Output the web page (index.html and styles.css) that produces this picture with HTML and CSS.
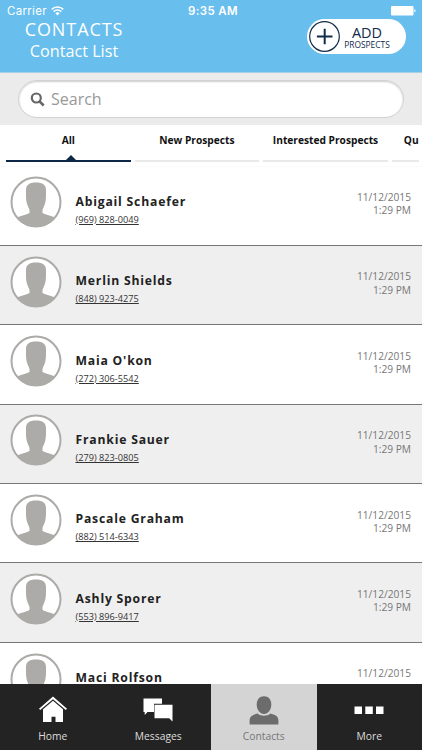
FILE: index.html
```html
<!DOCTYPE html>
<html lang="en">
<head>
  <meta charset="UTF-8">
  <meta name="viewport" content="width=device-width, initial-scale=1.0">
  <title>Contact List</title>
  <link rel="stylesheet" href="styles.css">
</head>
<body>
  <svg class="defs" width="0" height="0">
    <symbol id="avatar" viewBox="0 0 52 52">
      <circle cx="26" cy="26" r="24.500" fill="#fff"/>
      <path d="M26 6.500c7 0 10 2.500 10 7.500 0 5 .2 9-.8 13-.8 3-2.200 5-2.700 7v3c2.500 1.500 7 2 12.500 4.500C41 47.500 34 51 26 51S11 47.500 7 41.500C12.500 39 17 38.500 19.500 37v-3c-.5-2-1.900-4-2.700-7-1-4-.8-8-.8-13 0-5 3-7.500 10-7.500z" fill="#acaba8"/>
      <circle cx="26" cy="26" r="24.500" fill="none" stroke="#acaba8" stroke-width="2"/>
    </symbol>
  </svg>

  <div class="app">
    <header class="header">
      <div class="status">
        <span class="carrier">Carrier
          <svg class="wifi" width="13" height="10" viewBox="0 0 13 10" fill="none" stroke="#fff" stroke-width="1.5">
            <path d="M.7 3.400a8.400 8.400 0 0 1 11.600 0M2.700 5.600a5.500 5.500 0 0 1 7.600 0"/>
            <path d="M4.400 7.200a3.200 3.200 0 0 1 4.200 0L6.500 9.500z" fill="#fff" stroke="none"/>
          </svg>
        </span>
        <span class="time">9:35 AM</span>
        <svg class="battery" width="25" height="10" viewBox="0 0 25 10" fill="#fff">
          <rect width="22.500" height="9.500" rx="1"/>
          <path d="M23.300 3.300q1.300.4 1.300 1.500t-1.300 1.500z"/>
        </svg>
      </div>
      <div class="title-bar">
        <div class="titles">
          <h1>CONTACTS</h1>
          <h2>Contact List</h2>
        </div>
        <button class="add">
          <svg width="31" height="31" viewBox="0 0 31 31" fill="none" stroke="#102b4b">
            <circle cx="15.500" cy="15.500" r="14.800" stroke-width="1.200"/>
            <path d="M15.700 7.700v15.600M7.900 15.500h15.600" stroke-width="2"/>
          </svg>
          <span class="add-text"><b>ADD</b><small>PROSPECTS</small></span>
        </button>
      </div>
    </header>

    <div class="search">
      <div class="search-box">
        <svg width="15" height="15" viewBox="0 0 15 15" fill="none" stroke="#666">
          <circle cx="6.300" cy="6" r="4.500" stroke-width="2.200"/>
          <path d="M9.500 9.300l4.200 4.200" stroke-width="2.600"/>
        </svg>
        <span>Search</span>
      </div>
    </div>

    <nav class="tabs">
      <div class="tab active">All</div>
      <div class="tab">New Prospects</div>
      <div class="tab">Interested Prospects</div>
      <div class="tab cut">Qu</div>
    </nav>

    <main class="list">
      <div class="row">
        <svg class="avatar"><use href="#avatar"/></svg>
        <div class="info"><h3>Abigail Schaefer</h3><span class="phone">(969) 828-0049</span></div>
        <div class="date">11/12/2015<br>1:29 PM</div>
      </div>
      <div class="row">
        <svg class="avatar"><use href="#avatar"/></svg>
        <div class="info"><h3>Merlin Shields</h3><span class="phone">(848) 923-4275</span></div>
        <div class="date">11/12/2015<br>1:29 PM</div>
      </div>
      <div class="row">
        <svg class="avatar"><use href="#avatar"/></svg>
        <div class="info"><h3>Maia O'kon</h3><span class="phone">(272) 306-5542</span></div>
        <div class="date">11/12/2015<br>1:29 PM</div>
      </div>
      <div class="row">
        <svg class="avatar"><use href="#avatar"/></svg>
        <div class="info"><h3>Frankie Sauer</h3><span class="phone">(279) 823-0805</span></div>
        <div class="date">11/12/2015<br>1:29 PM</div>
      </div>
      <div class="row">
        <svg class="avatar"><use href="#avatar"/></svg>
        <div class="info"><h3>Pascale Graham</h3><span class="phone">(882) 514-6343</span></div>
        <div class="date">11/12/2015<br>1:29 PM</div>
      </div>
      <div class="row">
        <svg class="avatar"><use href="#avatar"/></svg>
        <div class="info"><h3>Ashly Sporer</h3><span class="phone">(553) 896-9417</span></div>
        <div class="date">11/12/2015<br>1:29 PM</div>
      </div>
      <div class="row">
        <svg class="avatar"><use href="#avatar"/></svg>
        <div class="info"><h3>Maci Rolfson</h3></div>
        <div class="date">11/12/2015</div>
      </div>
    </main>

    <footer class="bottom-nav">
      <div class="nav-item">
        <svg width="30" height="30" viewBox="0 0 30 30" fill="#fff">
          <path d="M15 .5l14 12.300-1.200 1.200L15 3.200 2.200 14 1 12.800z"/>
          <path d="M15 4.700l10 8.500V26h-7.500v-5.300h-4V26H5V13.200z"/>
        </svg>
        <span>Home</span>
      </div>
      <div class="nav-item">
        <svg width="30" height="30" viewBox="0 0 30 30" fill="#fff">
          <path d="M.5 2.500H19v5.300H11V16H4.500L1.700 19v-3H.5z"/>
          <path d="M11.500 8.700h18V25.500l-3.300-3.200H11.500z"/>
        </svg>
        <span>Messages</span>
      </div>
      <div class="nav-item selected">
        <svg width="30" height="30" viewBox="0 0 30 30" fill="#6c6c6c">
          <path d="M15 .2c4.500 0 7.300 3.300 7.300 8.300 0 5.200-3.200 9.500-7.300 9.500s-7.300-4.300-7.300-9.500C7.700 3.500 10.500.2 15 .2z"/>
          <path d="M8.500 17.500c3.500 3 9.500 3 13 0 4 1.200 7.500 2.200 7.900 6.500v4.500H.6V24C1 19.700 4.500 18.700 8.500 17.500z"/>
        </svg>
        <span>Contacts</span>
      </div>
      <div class="nav-item">
        <svg width="30" height="30" viewBox="0 0 30 30" fill="#fff">
          <path d="M.5 10.500H8V18H.5zM11.300 10.500h7.500V18h-7.500zM22 10.500h7.500V18H22z"/>
        </svg>
        <span>More</span>
      </div>
    </footer>
  </div>
</body>
</html>
```

FILE: styles.css
```css
* {
  box-sizing: border-box;
}

body {
  margin: 0;
  font-family: "Open Sans", "Noto Sans", sans-serif;
  background: #fff;
}

h1, h2, h3 {
  margin: 0;
  font-weight: normal;
}

.defs {
  display: none;
}

.app {
  display: flex;
  flex-direction: column;
  height: 750px;
  overflow: hidden;
}

/* header */
.header {
  flex: none;
  height: 73px;
  background: #68beed;
  border-bottom: 1px solid #a5d0e8;
  color: #fff;
}

.status {
  display: grid;
  grid-template-columns: 1fr auto 1fr;
  align-items: center;
  height: 19px;
  padding: 3px 6px 0 7px;
  font-family: Inter, sans-serif;
  font-size: 11.5px;
  line-height: 16px;
}

.carrier {
  display: flex;
  gap: 4px;
  align-items: center;
  letter-spacing: 0.3px;
}

.time {
  padding-left: 3px;
  font-weight: 600;
  letter-spacing: 0.4px;
}

.battery {
  justify-self: end;
}

.title-bar {
  display: flex;
  justify-content: space-between;
  padding: 0 16px 0 24px;
}

.titles {
  width: 100px;
  text-align: center;
}

.titles h1 {
  font-size: 18px;
  line-height: 20px;
  letter-spacing: 0.9px;
  white-space: nowrap;
}

.titles h2 {
  font-size: 16.2px;
  line-height: 25px;
  white-space: nowrap;
}

.add {
  display: flex;
  align-items: center;
  width: 99px;
  height: 35px;
  padding: 0 0 0 2px;
  border: none;
  border-radius: 18px;
  background: #fff;
  color: #102b4b;
  font-family: inherit;
}

.add-text {
  display: flex;
  flex-direction: column;
  align-items: center;
  width: 54px;
  padding-top: 2px;
}

.add b {
  font-size: 14.500px;
  font-weight: normal;
  line-height: 14px;
}

.add small {
  font-size: 8.400px;
  line-height: 10px;
}

/* search */
.search {
  flex: none;
  height: 52px;
  padding: 7px 18px;
  background: #ebebeb;
}

.search-box {
  display: flex;
  align-items: center;
  gap: 6px;
  height: 38px;
  padding: 0 11px;
  border: 1px solid #d2d2d2;
  border-radius: 19px;
  background: #fff;
  box-shadow: inset 0 1px 2px #ccc;
  color: #999;
  font-size: 16px;
}

/* tabs */
.tabs {
  flex: none;
  display: flex;
  gap: 4px;
  height: 41.500px;
  padding: 0 3px 4px 6px;
  border-bottom: 1px solid #fafafa;
  overflow: hidden;
}

.tab {
  flex: 0 0 124.600px;
  height: 37px;
  padding-top: 8px;
  border-bottom: 2px solid #e9e9e9;
  color: #111;
  font-size: 10.200px;
  font-weight: bold;
  line-height: 15px;
  text-align: center;
}

.tab.active {
  position: relative;
  border-color: #0d2846;
}

/* pointer above the active line */
.tab.active::after {
  content: "";
  position: absolute;
  left: 52%;
  bottom: 0;
  margin-left: -5px;
  border: 5px solid transparent;
  border-top: none;
  border-bottom-color: #0d2846;
}

.tab.cut {
  flex: 0 0 27px;
  padding-left: 12px;
  text-align: left;
}

/* contacts */
.list {
  flex: 1;
  min-height: 0;
  overflow: hidden;
}

.row {
  display: flex;
  height: 79.400px;
  padding: 9.800px 11px 0 10px;
  border-bottom: 1px solid #777;
}

.row:nth-child(even) {
  background: #efefef;
}

.avatar {
  width: 52px;
  height: 52px;
}

.info {
  flex: 1;
  padding: 15.500px 0 0 13.500px;
}

.info h3 {
  color: #222;
  font-size: 12.200px;
  font-weight: bold;
  line-height: 19px;
  letter-spacing: 0.8px;
}

.phone {
  display: block;
  color: #333;
  font-size: 9.200px;
  line-height: 18px;
  text-decoration: underline;
}

.date {
  padding-top: 14.700px;
  color: #777;
  font-size: 10.200px;
  line-height: 13.500px;
  text-align: right;
}

/* bottom navigation */
.bottom-nav {
  flex: none;
  display: grid;
  grid-template-columns: repeat(4, 1fr);
  height: 66.500px;
}

.nav-item {
  display: flex;
  flex-direction: column;
  align-items: center;
  padding-top: 12px;
  background: #232323;
  color: #ddd;
  font-size: 10.300px;
  line-height: 20px;
}

.nav-item.selected {
  background: #d4d4d4;
  color: #777;
}
```
